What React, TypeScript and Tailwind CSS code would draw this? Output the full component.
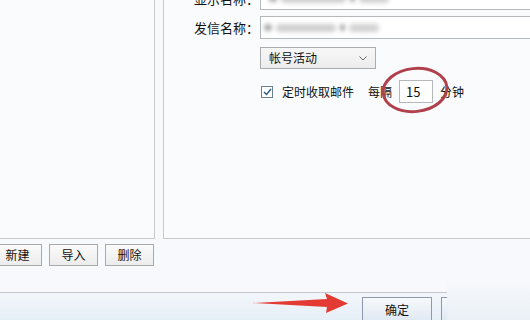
import React from "react";

const font = { fontFamily: '"Noto Sans CJK SC", "Noto Sans", sans-serif' };

function Blur({ w }: { w: number }) {
  return (
    <div className="flex items-center gap-[4px] blur-[2px]" style={{ width: w }}>
      <div className="h-[7px] w-[8px] bg-[#a8a8a8] rounded-sm" />
      <div className="h-[8px] flex-1 bg-[#d0d0d0] rounded-sm" />
      <div className="h-[7px] w-[5px] bg-[#a5a5a5] rounded-sm" />
      <div className="h-[8px] w-[30px] bg-[#d2d2d2] rounded-sm" />
    </div>
  );
}

function Btn({ children }: { children: React.ReactNode }) {
  return (
    <div className="w-[49px] h-[22px] border border-[#a9a9a9] bg-gradient-to-b from-[#fbfbfb] to-[#ececec] flex items-center justify-center text-[12px] text-[#111]">
      {children}
    </div>
  );
}

export default function App() {
  return (
    <div className="w-[530px] h-[320px] bg-[#f7f9fc] relative overflow-hidden flex flex-col text-[#111]" style={font}>
      <div className="flex h-[292px] shrink-0">
        <div className="w-[155px] shrink-0 flex flex-col">
          <div className="h-[239px] border-r border-b border-[#c9c9c9] bg-[#f9fbfd]" />
          <div className="flex gap-[7px] mt-[5px] -ml-[7px]">
            <Btn>新建</Btn>
            <Btn>导入</Btn>
            <Btn>删除</Btn>
          </div>
        </div>
        <div className="ml-[8px] flex-1 h-[239px] border-l border-b border-[#c9c9c9] bg-[#f9fbfd]">
          <div className="flex flex-col pl-[30px] -mt-[13px]">
            <div className="flex items-center h-[23px]">
              <div className="w-[66px] text-[13px]">显示名称：</div>
              <div className="flex-1 h-[23px] bg-white border border-[#b5b8bd] border-r-0 flex items-center pl-[8px]">
                <Blur w={120} />
              </div>
            </div>
            <div className="flex items-center h-[23px] mt-[6px]">
              <div className="w-[66px] text-[13px]">发信名称：</div>
              <div className="flex-1 h-[23px] bg-white border border-[#b5b8bd] border-r-0 flex items-center pl-[3px]">
                <Blur w={115} />
              </div>
            </div>
            <div className="flex mt-[8px] pl-[66px]">
              <div className="w-[116px] h-[22px] border border-[#acacac] bg-gradient-to-b from-[#f7f7f7] to-[#ededed] flex items-center justify-between pl-[8px] pr-[8px] text-[12px]">
                <span>帐号活动</span>
                <svg width="8" height="5" viewBox="0 0 8 5">
                  <path d="M0.5 0.5 L4 4 L7.5 0.5" fill="none" stroke="#666" strokeWidth="1" />
                </svg>
              </div>
            </div>
            <div className="flex items-center mt-[11px] pl-[67px] h-[23px] text-[12px]">
              <div className="w-[12px] h-[12px] border border-[#6a7f94] bg-white flex items-center justify-center">
                <svg width="9" height="8" viewBox="0 0 9 8">
                  <path d="M1 4 L3.5 6.5 L8 1" fill="none" stroke="#2b5f86" strokeWidth="1.5" />
                </svg>
              </div>
              <span className="ml-[9px]">定时收取邮件</span>
              <span className="ml-[14px]">每隔</span>
              <div className="ml-[7px] w-[34px] h-[23px] bg-white border border-[#b5b8bd] flex items-center pl-[6px] text-[13px]">15</div>
              <span className="ml-[7px]">分钟</span>
            </div>
          </div>
        </div>
      </div>
      <div className="flex-1 border-t border-[#c4c8cd] bg-gradient-to-b from-[#f3f7fb] to-[#e4edf6] flex pt-[4px] pl-[362px]">
        <div className="w-[70px] h-[26px] border border-[#8d9aab] bg-gradient-to-b from-[#f6f9fc] to-[#dfe8f2] flex items-center justify-center text-[12px]">确定</div>
        <div className="ml-[9px] w-[70px] h-[26px] border border-[#8d9aab] bg-gradient-to-b from-[#f6f9fc] to-[#dfe8f2]" />
      </div>
      <div className="absolute left-[447px] top-[278px] w-[83px] h-[42px] bg-gradient-to-b from-[#f7f9fc] to-[#eaf0f6]" />
      <svg className="absolute left-0 top-0" width="530" height="320">
        <ellipse cx="415" cy="90" rx="32" ry="21.5" fill="none" stroke="#b0404c" strokeWidth="3" transform="rotate(-6 415 90)" />
        <path d="M252 303 L327 299 L325 293 L348 303.5 L326 313 L327 307 Z" fill="#e43a34" />
      </svg>
    </div>
  );
}
